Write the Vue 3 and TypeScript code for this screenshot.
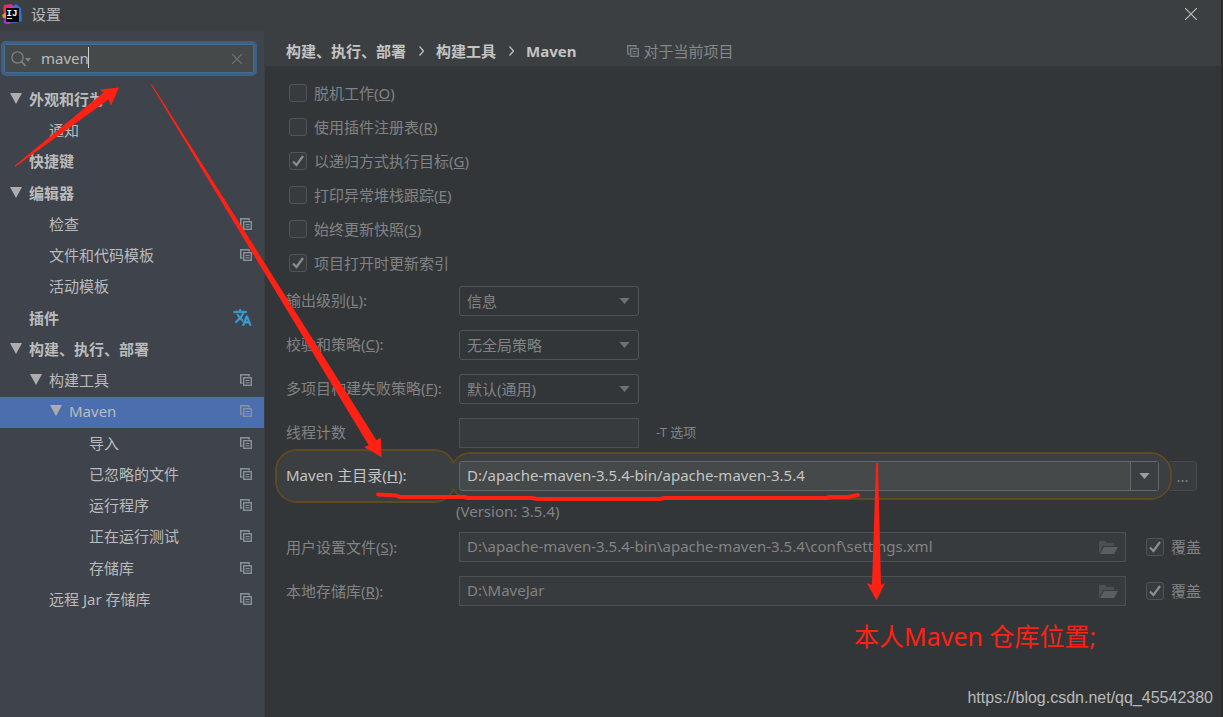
<script setup lang="ts">
import { ref } from 'vue'

interface TreeRow {
  text: string
  level: number
  open?: boolean
  bold?: boolean
  icon?: 'project' | 'translate'
}

interface Option {
  text: string
  key: string
  on: boolean
}

interface Combo {
  id: string
  text: string
  key: string
  value: string
}

const query = ref('maven')
const selected = ref('Maven')
const home = ref('D:/apache-maven-3.5.4-bin/apache-maven-3.5.4')
const threads = ref('')

const tree: TreeRow[] = [
  { text: '外观和行为', level: 0, open: true, bold: true },
  { text: '通知', level: 1 },
  { text: '快捷键', level: 0, bold: true },
  { text: '编辑器', level: 0, open: true, bold: true },
  { text: '检查', level: 1, icon: 'project' },
  { text: '文件和代码模板', level: 1, icon: 'project' },
  { text: '活动模板', level: 1 },
  { text: '插件', level: 0, bold: true, icon: 'translate' },
  { text: '构建、执行、部署', level: 0, open: true, bold: true },
  { text: '构建工具', level: 1, open: true, icon: 'project' },
  { text: 'Maven', level: 2, open: true, icon: 'project' },
  { text: '导入', level: 3, icon: 'project' },
  { text: '已忽略的文件', level: 3, icon: 'project' },
  { text: '运行程序', level: 3, icon: 'project' },
  { text: '正在运行测试', level: 3, icon: 'project' },
  { text: '存储库', level: 3, icon: 'project' },
  { text: '远程 Jar 存储库', level: 1, icon: 'project' },
]

const options = ref<Option[]>([
  { text: '脱机工作', key: 'O', on: false },
  { text: '使用插件注册表', key: 'R', on: false },
  { text: '以递归方式执行目标', key: 'G', on: true },
  { text: '打印异常堆栈跟踪', key: 'E', on: false },
  { text: '始终更新快照', key: 'S', on: false },
  { text: '项目打开时更新索引', key: '', on: true },
])

const combos: Combo[] = [
  { id: 'output', text: '输出级别', key: 'L', value: '信息' },
  { id: 'checksum', text: '校验和策略', key: 'C', value: '无全局策略' },
  { id: 'failure', text: '多项目构建失败策略', key: 'F', value: '默认(通用)' },
]

const paths = ref([
  { id: 'settings', text: '用户设置文件', key: 'S', value: 'D:\\apache-maven-3.5.4-bin\\apache-maven-3.5.4\\conf\\settings.xml', override: true },
  { id: 'repository', text: '本地存储库', key: 'R', value: 'D:\\MaveJar', override: true },
])
</script>

<template>
  <div class="window">
    <header class="titlebar">
      <svg class="logo" viewBox="0 0 20 20" aria-hidden="true">
        <path d="M2 1 L9 0 L14 6 L8 20 L2 19 L4 13 L1 6Z" fill="#ee2a62" />
        <path d="M0 11 L5 7 L5 15 L1 14Z" fill="#f58a26" />
        <path d="M10 3 L14 0 L19 4 L20 17 L14 19 L9 19Z" fill="#2f6fe0" />
        <path d="M9 0 L14 4 L6 6Z" fill="#b13fc0" />
        <path d="M2 16 L8 16 L7 20 L2 19Z" fill="#9b3fd6" />
        <rect x="4" y="4" width="13" height="14" fill="#08080a" />
        <text x="4.500" y="12" class="logo-text">IJ</text>
        <rect x="5" y="14" width="5" height="1" fill="#ddd" />
      </svg>
      <h1>设置</h1>
      <button class="close" type="button" aria-label="关闭">
        <svg viewBox="0 0 12 12"><path d="M0 0L12 12M12 0L0 12" stroke="#bbb" stroke-width="1.2" /></svg>
      </button>
    </header>

    <div class="body">
      <aside class="sidebar">
        <div class="search">
          <svg class="lens" viewBox="0 0 20 16" aria-hidden="true">
            <circle cx="6.5" cy="6.5" r="5.6" fill="none" stroke="#7b8387" stroke-width="1.3" />
            <path d="M10.5 10.5L14.5 15" stroke="#7b8387" stroke-width="1.8" />
            <path d="M14 7H20L17 11Z" fill="#7b8387" />
          </svg>
          <input v-model="query" type="text" aria-label="搜索设置" />
          <span class="caret"></span>
          <button type="button" aria-label="清除" @click="query = ''">
            <svg viewBox="0 0 10 10"><path d="M0 0L10 10M10 0L0 10" stroke="#6f7577" stroke-width="1.2" /></svg>
          </button>
        </div>
        <ul class="tree">
          <li v-for="row in tree" :key="row.text">
            <button
              type="button"
              :class="['row', 'level-' + row.level, { bold: row.bold, selected: row.text === selected }]"
              @click="selected = row.text"
            >
              <span class="twist">
                <svg v-if="row.open" viewBox="0 0 12 11"><path d="M0 0H12L6 11Z" fill="#adadad" /></svg>
              </span>
              <span class="name">{{ row.text }}</span>
              <svg v-if="row.icon === 'project'" class="project" viewBox="0 0 12 12">
                <path d="M9 2.5V.75H.75V9H2.5" fill="none" stroke="#87939a" stroke-width="1.5" />
                <rect x="3.7" y="3.7" width="7.6" height="7.6" fill="none" stroke="#87939a" stroke-width="1.4" />
                <path d="M5.5 6.5H9.5M5.5 8.8H9.5" stroke="#87939a" />
              </svg>
              <svg v-if="row.icon === 'translate'" class="translate" viewBox="0 0 24 24">
                <path
                  fill="#389fd6"
                  stroke="#389fd6"
                  stroke-width="0.9"
                  d="M12.87 15.07l-2.54-2.51.03-.03A17.5 17.5 0 0 0 14.07 6H17V4h-7V2H8v2H1v2h11.17C11.5 7.92 10.44 9.75 9 11.35 8.07 10.32 7.3 9.19 6.69 8h-2c.73 1.63 1.73 3.17 2.98 4.56l-5.09 5.02L4 19l5-5 3.11 3.11.76-2.04zM18.5 10h-2L12 22h2l1.12-3h4.75L21 22h2l-4.5-12zm-2.62 7l1.62-4.33L19.12 17h-3.24z"
                />
              </svg>
            </button>
          </li>
        </ul>
      </aside>

      <main class="content">
        <nav class="crumbs">
          <a href="#">构建、执行、部署</a>
          <svg class="sep" viewBox="0 0 5 10"><path d="M.5 .5L4.5 5L.5 9.5" fill="none" stroke="#bbb" stroke-width="1.3" /></svg>
          <a href="#">构建工具</a>
          <svg class="sep" viewBox="0 0 5 10"><path d="M.5 .5L4.5 5L.5 9.5" fill="none" stroke="#bbb" stroke-width="1.3" /></svg>
          <a href="#">Maven</a>
          <span class="scope">
            <svg class="project" viewBox="0 0 12 12">
              <path d="M9 2.5V.75H.75V9H2.5" fill="none" stroke="#77838a" stroke-width="1.3" />
              <rect x="3.7" y="3.7" width="7.6" height="7.6" fill="none" stroke="#77838a" stroke-width="1.3" />
              <path d="M5.5 6.5H9.5M5.5 8.8H9.5" stroke="#77838a" />
            </svg>
            对于当前项目
          </span>
        </nav>

        <form class="form" @submit.prevent>
          <div class="options">
            <label v-for="option in options" :key="option.text" class="check">
              <input v-model="option.on" type="checkbox" />
              <svg viewBox="0 0 12 12"><path d="M1 6.5L4.5 10L11 1" fill="none" stroke="#8b8d8e" stroke-width="2.2" /></svg>
              <span>{{ option.text }}<template v-if="option.key">(<u>{{ option.key }}</u>)</template></span>
            </label>
          </div>

          <div v-for="combo in combos" :key="combo.id" class="line">
            <label class="caption" :for="combo.id">{{ combo.text }}(<u>{{ combo.key }}</u>):</label>
            <div class="select">
              <select :id="combo.id"><option>{{ combo.value }}</option></select>
              <svg class="arrow" viewBox="0 0 12 7"><path d="M0 0H12L6 7Z" fill="#6e7072" /></svg>
            </div>
          </div>

          <div class="line">
            <label class="caption" for="threads">线程计数</label>
            <input id="threads" v-model="threads" class="field short" type="text" />
            <span class="hint">-T 选项</span>
          </div>

          <div class="line home">
            <label class="caption lit" for="home"><span>Maven 主目录(<u>H</u>):</span></label>
            <div class="spot">
              <div class="combo">
                <input id="home" v-model="home" type="text" />
                <button type="button" aria-label="展开">
                  <svg class="arrow" viewBox="0 0 12 7"><path d="M0 0H12L6 7Z" fill="#9c9fa0" /></svg>
                </button>
              </div>
            </div>
            <button class="browse" type="button">...</button>
          </div>
          <p class="version">(Version: 3.5.4)</p>

          <div v-for="path in paths" :key="path.id" class="line path">
            <label class="caption" :for="path.id">{{ path.text }}(<u>{{ path.key }}</u>):</label>
            <div class="field file">
              <input :id="path.id" v-model="path.value" type="text" />
              <button type="button" aria-label="浏览">
                <svg viewBox="0 0 19 15">
                  <path d="M0 14V1H6L8 3H15V6H4L0 14Z" fill="#4c5053" />
                  <path d="M5 7H19L15 14H1Z" fill="#5a5e61" />
                </svg>
              </button>
            </div>
            <label class="check">
              <input v-model="path.override" type="checkbox" />
              <svg viewBox="0 0 12 12"><path d="M1 6.5L4.5 10L11 1" fill="none" stroke="#8b8d8e" stroke-width="2.2" /></svg>
              <span>覆盖</span>
            </label>
          </div>
        </form>
      </main>
    </div>

    <svg class="marks" width="1223" height="717" viewBox="0 0 1223 717" aria-hidden="true">
      <g fill="#ff2113">
        <path d="M15 167L15 165.500L103.500 92.500L99.500 89.500L119 87.500L111 105.500L108.500 99.500Z" />
        <path d="M151 85L152 84.500L376.300 440L381 438L381.500 457L364 447L368.700 445.300Z" />
        <path d="M876 463H878L881 585L885 583L876.500 600.500L867 583L872 585Z" />
      </g>
      <path
        d="M378 494.500L396 495.500L400 497H464L468 498L532 498L537 499H660L664 498H826L830 497L848 497L858 495"
        fill="none" stroke="#ff2113" stroke-width="4" stroke-linecap="round" stroke-linejoin="round"
      />
    </svg>
    <p class="note">本人Maven 仓库位置;</p>
    <p class="watermark">https://blog.csdn.net/qq_45542380</p>
  </div>
</template>

<style>
body {
  margin: 0;
  background: #2b2b2b;
}
</style>

<style scoped>
*,
*::before,
*::after {
  box-sizing: border-box;
}

.window {
  position: relative;
  display: flex;
  flex-direction: column;
  min-height: 100vh;
  overflow: hidden;
  border-right: 2px solid #2a2b2c;
  background: #3c3f41;
  color: #bbb;
  font: 15px/20px "Noto Sans", "Noto Sans CJK SC", sans-serif;
}

input,
select,
button {
  margin: 0;
  padding: 0;
  border: 0;
  outline: 0;
  background: none;
  color: inherit;
  font: inherit;
}

svg {
  display: block;
  flex: none;
}

p,
h1,
ul {
  margin: 0;
  padding: 0;
}

.titlebar {
  display: flex;
  align-items: center;
  height: 31px;
  padding: 0 24px 4px 2px;
}

.logo {
  width: 20px;
  height: 20px;
}

.logo-text {
  fill: #fff;
  font: bold 9px "Liberation Mono", monospace;
}

h1 {
  flex: 1;
  margin-left: 9px;
  font-size: 15px;
  font-weight: 400;
}

.close svg {
  width: 12px;
  height: 12px;
}

.body {
  display: flex;
  flex: 1;
}

.sidebar {
  width: 264px;
  flex: none;
  padding-top: 10px;
  background: #3e434c;
}

.search {
  position: relative;
  display: flex;
  align-items: center;
  height: 35px;
  margin: 0 7px 9px 1px;
  padding: 0 12px 0 7px;
  border: 3px solid #3d6185;
  border-radius: 5px;
  background: #45494a;
  box-shadow: inset 0 0 0 1px #466d94;
}

.lens {
  width: 20px;
  height: 16px;
}

.search input {
  flex: 1;
  min-width: 0;
  margin-left: 10px;
  padding-bottom: 2px;
}

.caret {
  position: absolute;
  top: 3px;
  left: 84px;
  width: 1px;
  height: 21px;
  background: #d0d0d0;
}

.search button svg {
  width: 10px;
  height: 10px;
}

.tree {
  list-style: none;
}

.tree li:nth-child(4n + 3) {
  margin-bottom: 1px;
}

.row {
  display: flex;
  align-items: center;
  width: 100%;
  height: 31px;
  padding-right: 12px;
  padding-bottom: 4px;
  text-align: left;
}

.row.bold {
  font-weight: 700;
}

.row.selected {
  background: #4b6eaf;
}

.level-0 { padding-left: 10px; }
.level-1 { padding-left: 30px; }
.level-2 { padding-left: 50px; }
.level-3 { padding-left: 70px; }

.twist {
  width: 19px;
}

.twist svg {
  width: 12px;
  height: 11px;
}

.name {
  flex: 1;
}

.project {
  width: 12px;
  height: 12px;
}

.translate {
  width: 19px;
  height: 19px;
}

.content {
  display: flex;
  flex: 1;
  flex-direction: column;
  min-width: 0;
}

.crumbs {
  display: flex;
  align-items: center;
  height: 35px;
  padding: 4px 0 0 22px;
  font-weight: 700;
}

.crumbs a {
  color: #c4c4c4;
  text-decoration: none;
}

.sep {
  width: 5px;
  height: 10px;
  margin: 0 12px 0 13px;
}

.scope {
  display: flex;
  align-items: center;
  gap: 4px;
  margin-left: 51px;
  color: #85888a;
  font-weight: 400;
}

.form {
  flex: 1;
  margin-left: 1px;
  padding: 10px 20px 0 21px;
  background: #333638;
  color: #818384;
}

.options {
  display: flex;
  flex-direction: column;
  margin-bottom: 6px;
}

.options .check {
  height: 34px;
  padding-left: 3px;
}

.check {
  position: relative;
  display: flex;
  align-items: center;
  gap: 7px;
}

.check input {
  width: 18px;
  height: 18px;
  appearance: none;
  border: 1px solid #515456;
  border-radius: 3px;
  background: #383b3d;
}

.check svg {
  display: none;
  width: 12px;
  height: 12px;
  margin: 0 3px 0 -22px;
}

.check input:checked + svg {
  display: block;
}

.line {
  display: flex;
  align-items: center;
  height: 30px;
  margin-bottom: 14px;
}

.caption {
  width: 173px;
  flex: none;
  padding-bottom: 2px;
}

.path .caption {
  padding-bottom: 0;
}

.select {
  position: relative;
  width: 180px;
  height: 30px;
}

.select select {
  width: 100%;
  height: 100%;
  padding-left: 7px;
  appearance: none;
  border: 1px solid #505355;
  border-radius: 3px;
}

.arrow {
  width: 11px;
  height: 6px;
}

.select .arrow {
  position: absolute;
  top: 12px;
  right: 9px;
  pointer-events: none;
}

.field {
  height: 30px;
  padding-left: 7px;
  border: 1px solid #4d5052;
  background: #383b3d;
}

.short {
  width: 180px;
}

.hint {
  margin-left: 17px;
  padding-bottom: 2px;
  font-size: 13px;
}

.home {
  position: relative;
  z-index: 0;
  margin-top: -1px;
  padding-right: 4px;
}

/* The highlight joins two rounded frames: both outlines lie below both fills. */
.lit::before,
.lit::after,
.spot::before,
.spot::after {
  position: absolute;
  content: "";
}

.lit::before {
  z-index: 1;
  top: -12px;
  left: -11px;
  width: 181px;
  height: 54px;
  border: 2px solid #614a20;
  border-radius: 22px;
}

.lit::after {
  z-index: 2;
  top: -10px;
  left: -9px;
  width: 177px;
  height: 50px;
  border-radius: 20px;
  background: #3c3f41;
}

.spot::before {
  z-index: 1;
  top: -9px;
  right: 29px;
  left: 163px;
  height: 48px;
  border: 2px solid #614a20;
  border-radius: 22px;
}

.spot::after {
  z-index: 2;
  top: -7px;
  right: 31px;
  left: 165px;
  height: 44px;
  border-radius: 20px;
  background: #3c3f41;
}

.lit {
  color: #c4c4c4;
}

.lit span,
.combo {
  position: relative;
  z-index: 3;
}

.spot {
  flex: 1;
}

.combo {
  display: flex;
  height: 30px;
  border: 1px solid #646769;
  border-radius: 3px;
  background: #45494a;
}

.combo input {
  flex: 1;
  min-width: 0;
  padding: 0 0 2px 7px;
  color: #c4c4c4;
}

.combo button {
  display: flex;
  align-items: center;
  justify-content: center;
  width: 28px;
  border-left: 1px solid #646769;
  background: #3c3f41;
}

.browse {
  width: 29px;
  height: 30px;
  margin-left: 9px;
  border: 1px solid #494c4e;
  border-radius: 3px;
  background: #393c3e;
}

.version {
  margin: -4px 0 11px 170px;
}

.file {
  display: flex;
  flex: 1;
  align-items: center;
  padding-right: 7px;
}

.file input {
  flex: 1;
  min-width: 0;
  padding-bottom: 2px;
}

.file svg {
  width: 19px;
  height: 15px;
}

.path .check {
  margin-left: 20px;
}

.marks {
  position: absolute;
  top: 0;
  left: 0;
  z-index: 5;
  pointer-events: none;
}

.note {
  position: absolute;
  top: 618px;
  left: 854px;
  z-index: 5;
  color: #ff2113;
  font-size: 25px;
  line-height: 36px;
  white-space: nowrap;
}

.watermark {
  position: absolute;
  right: 8px;
  bottom: 9px;
  z-index: 5;
  color: #b9babb;
  font: 16px/20px "Liberation Sans", sans-serif;
}
</style>
